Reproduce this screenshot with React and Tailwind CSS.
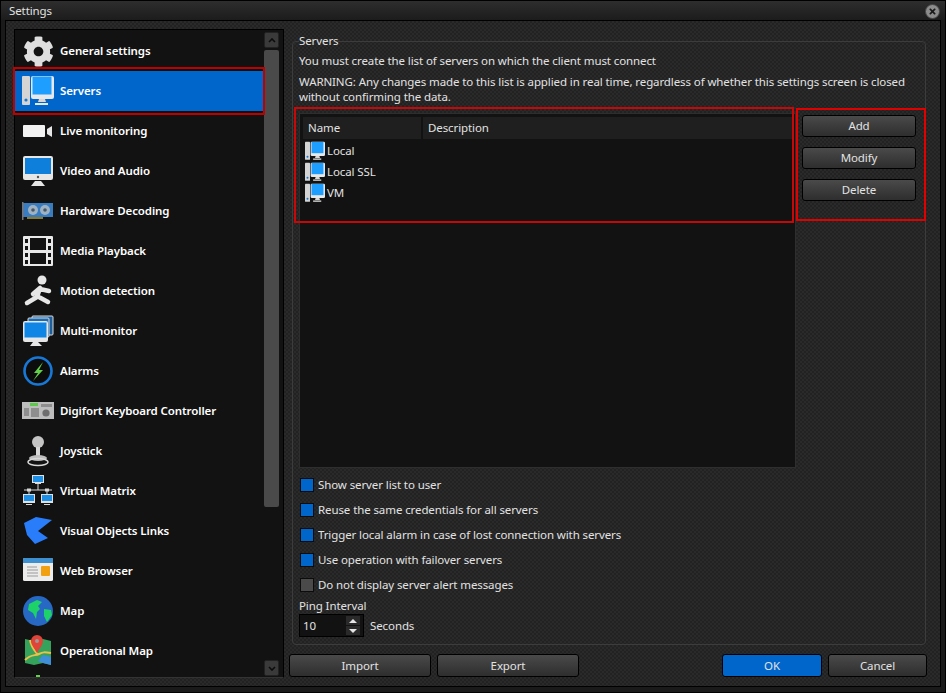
import { FaCog, FaTimes } from "react-icons/fa";

function ServerIcon({ className }) {
  return (
    <svg viewBox="0 0 32 32" className={className}>
      <rect x="0" y="1" width="8" height="29" rx="1" fill="#d4d4d4" />
      <circle cx="4" cy="25" r="1.6" fill="#1478d8" />
      <rect x="9" y="1" width="23" height="23" rx="2" fill="#e8e8e8" />
      <rect x="10.5" y="1.5" width="19" height="18" fill="#1e9fff" />
      <path d="M17 24h6l1 3h-8z" fill="#d8d8d8" />
      <rect x="13" y="28" width="13" height="2" fill="#e8e8e8" />
    </svg>
  );
}

function CameraIcon() {
  return (
    <svg viewBox="0 0 32 32" className="w-8 h-8">
      <rect x="1" y="10" width="22" height="12" rx="1" fill="#f2f2f2" />
      <path d="M25 14l5-3v11l-5-3z" fill="#e6e6e6" />
    </svg>
  );
}

function MonitorIcon() {
  return (
    <svg viewBox="0 0 32 32" className="w-8 h-8">
      <rect x="1" y="1" width="30" height="24" rx="2" fill="#e6e6e6" />
      <rect x="3" y="3" width="26" height="16" fill="#0f7fdc" />
      <circle cx="16" cy="22" r="1.2" fill="#555" />
      <path d="M13 26h6l4 5H9z" fill="#e6e6e6" />
    </svg>
  );
}

function GpuIcon() {
  return (
    <svg viewBox="0 0 32 32" className="w-8 h-8">
      <rect x="1" y="8" width="30" height="14" fill="#3a7cc0" />
      <rect x="0" y="7" width="1.5" height="18" fill="#777" />
      <circle cx="11" cy="15" r="5" fill="#9fb2c4" />
      <circle cx="23" cy="15" r="5" fill="#9fb2c4" />
      <circle cx="11" cy="15" r="1.8" fill="#4a5a6a" />
      <circle cx="23" cy="15" r="1.8" fill="#4a5a6a" />
      <rect x="5" y="22" width="16" height="2" fill="#8a7a30" />
    </svg>
  );
}

function FilmIcon() {
  return (
    <svg viewBox="0 0 32 32" className="w-8 h-8">
      <path
        fillRule="evenodd"
        fill="#e8e8e8"
        d="M1 2a1 1 0 011-1h28a1 1 0 011 1v28a1 1 0 01-1 1H2a1 1 0 01-1-1zM8 3v12h16V3zM8 18v11h16V18zM3 4v4h3V4zM3 11v4h3v-4zM3 18v4h3v-4zM3 25v4h3v-4zM26 4v4h3V4zM26 11v4h3v-4zM26 18v4h3v-4zM26 25v4h3v-4z"
      />
    </svg>
  );
}

function RunnerIcon() {
  return (
    <svg viewBox="0 0 32 32" className="w-8 h-8">
      <circle cx="20" cy="5" r="4.5" fill="#e6e6e6" />
      <path
        d="M18 13l-3 9-10 6M15 21l11 6M18 14l9 2M18 13l-7 6"
        fill="none"
        stroke="#e6e6e6"
        strokeWidth="4.5"
        strokeLinecap="round"
        strokeLinejoin="round"
      />
    </svg>
  );
}

function MultiMonitorIcon() {
  return (
    <svg viewBox="0 0 32 32" className="w-8 h-8">
      <rect x="10" y="1" width="21" height="19" rx="1" fill="#1c5f9c" stroke="#dcdcdc" />
      <rect x="6" y="3" width="21" height="19" rx="1" fill="#1c6cb4" stroke="#dcdcdc" />
      <rect x="1" y="6" width="25" height="21" rx="2" fill="#e6e6e6" />
      <rect x="2.5" y="7.5" width="22" height="15" fill="#0f86e6" />
      <path d="M11 27h5l4 4H8z" fill="#e6e6e6" />
    </svg>
  );
}

function AlarmIcon() {
  return (
    <svg viewBox="0 0 32 32" className="w-8 h-8">
      <circle cx="16" cy="16" r="13.5" fill="#0c0c0c" stroke="#1878d8" strokeWidth="2.6" />
      <path d="M21 7l-9 11h4l-5 8 10-11h-4z" fill="#62d24a" />
    </svg>
  );
}

function KeyboardIcon() {
  return (
    <svg viewBox="0 0 32 32" className="w-8 h-8">
      <rect x="0" y="7" width="32" height="17" fill="#bdbdbd" />
      <rect x="8" y="8" width="8" height="3" fill="#5cc94a" />
      <rect x="19" y="9" width="11" height="3" fill="#8e8e8e" />
      <rect x="2" y="13" width="5" height="8" fill="#8e8e8e" />
      <rect x="9" y="13" width="8" height="9" fill="#8e8e8e" />
      <circle cx="24" cy="18" r="3.6" fill="#6e6e6e" />
    </svg>
  );
}

function JoystickIcon() {
  return (
    <svg viewBox="0 0 32 32" className="w-8 h-8">
      <circle cx="16" cy="7" r="6" fill="#c4c4c4" />
      <rect x="14" y="12" width="4" height="10" fill="#d8d8d8" />
      <ellipse cx="16" cy="23" rx="9" ry="3" fill="#bdbdbd" />
      <ellipse cx="16" cy="27" rx="10" ry="3.5" fill="none" stroke="#d8d8d8" strokeWidth="1.4" />
    </svg>
  );
}

function MatrixIcon() {
  return (
    <svg viewBox="0 0 32 32" className="w-8 h-8">
      <path d="M16 9v6M2 15h28M7 15v5M25 15v5" stroke="#d8d8d8" strokeWidth="1" fill="none" />
      <rect x="5" y="13.5" width="4" height="3" fill="#d8d8d8" />
      <rect x="23" y="13.5" width="4" height="3" fill="#d8d8d8" />
      <rect x="10" y="0" width="12" height="8" fill="#e0e0e0" />
      <rect x="11" y="1" width="10" height="6" fill="#1e8fe6" />
      <rect x="1" y="19" width="12" height="9" fill="#e0e0e0" />
      <rect x="2" y="20" width="10" height="6" fill="#1e8fe6" />
      <rect x="19" y="19" width="12" height="9" fill="#e0e0e0" />
      <rect x="20" y="20" width="10" height="6" fill="#1e8fe6" />
      <rect x="4" y="29" width="6" height="1" fill="#d8d8d8" />
      <rect x="22" y="29" width="6" height="1" fill="#d8d8d8" />
      <rect x="13" y="8" width="6" height="1" fill="#d8d8d8" />
    </svg>
  );
}

function ObjectsIcon() {
  return (
    <svg viewBox="0 0 32 32" className="w-8 h-8">
      <polygon points="2,8 14,2 30,5 16,16 26,23 13,29 5,20" fill="#2a7dfa" />
    </svg>
  );
}

function BrowserIcon() {
  return (
    <svg viewBox="0 0 32 32" className="w-8 h-8">
      <rect x="1" y="3" width="30" height="23" rx="1.5" fill="#ececec" />
      <path d="M1 4.5A1.5 1.5 0 012.500 3h27A1.500 1.500 0 0131 4.500V8H1z" fill="#3d8fd0" />
      <rect x="19" y="11" width="9" height="10" rx="1" fill="#f0a010" />
      <path d="M5 12h10M5 15h11M5 18h11M5 21h11" stroke="#9a9a9a" strokeWidth="1" />
    </svg>
  );
}

function GlobeIcon() {
  return (
    <svg viewBox="0 0 32 32" className="w-8 h-8">
      <circle cx="16" cy="16" r="15" fill="#2668c4" />
      <path d="M7 9l8-4 5 2-4 4 2 3-3 3-1 7-3-6-5-3z" fill="#1ed26a" />
      <path d="M22 14l7 1 1 5-5 7-3-6z" fill="#1ed26a" />
    </svg>
  );
}

function OpMapIcon() {
  return (
    <svg viewBox="0 0 32 32" className="w-8 h-8">
      <path d="M3 4l9 2 9-2 8 2v24l-8-2-9 2-9-2z" fill="#36a35c" />
      <path d="M21 20l8 2v8l-8-2-5-2z" fill="#3f8fd8" />
      <path d="M3 25c6-6 10-4 14-6s5-2 12-1M8 5c1 7 5 11 8 15" stroke="#e8c24a" strokeWidth="2" fill="none" />
      <path d="M15 0a6 6 0 016 6c0 4-4 8-6 12-2-4-6-8-6-12a6 6 0 016-6z" fill="#e04338" />
      <circle cx="15" cy="6" r="2" fill="#9a9a9a" />
    </svg>
  );
}

function BoltIcon() {
  return (
    <svg viewBox="0 0 32 32" className="w-8 h-8">
      <rect x="14" y="0" width="4" height="2" fill="#62d24a" />
    </svg>
  );
}

const menu = [
  { label: "General settings", icon: <FaCog className="w-[31px] h-[31px] text-[#dedede]" /> },
  { label: "Servers", icon: <ServerIcon className="w-8 h-8" />, active: true },
  { label: "Live monitoring", icon: <CameraIcon /> },
  { label: "Video and Audio", icon: <MonitorIcon /> },
  { label: "Hardware Decoding", icon: <GpuIcon /> },
  { label: "Media Playback", icon: <FilmIcon /> },
  { label: "Motion detection", icon: <RunnerIcon /> },
  { label: "Multi-monitor", icon: <MultiMonitorIcon /> },
  { label: "Alarms", icon: <AlarmIcon /> },
  { label: "Digifort Keyboard Controller", icon: <KeyboardIcon /> },
  { label: "Joystick", icon: <JoystickIcon /> },
  { label: "Virtual Matrix", icon: <MatrixIcon /> },
  { label: "Visual Objects Links", icon: <ObjectsIcon /> },
  { label: "Web Browser", icon: <BrowserIcon /> },
  { label: "Map", icon: <GlobeIcon /> },
  { label: "Operational Map", icon: <OpMapIcon /> },
  { label: "", icon: <BoltIcon /> },
];

const servers = ["Local", "Local SSL", "VM"];

const options = [
  { label: "Show server list to user", checked: true },
  { label: "Reuse the same credentials for all servers", checked: true },
  { label: "Trigger local alarm in case of lost connection with servers", checked: true },
  { label: "Use operation with failover servers", checked: true },
  { label: "Do not display server alert messages", checked: false },
];

function Button({ children, className = "", primary = false }) {
  return (
    <button
      className={
        "h-[22px] border border-black rounded-[3px] text-[#e2e2e2] flex items-center justify-center " +
        (primary ? "bg-[#0066cc] " : "bg-gradient-to-b from-[#4a4a4a] to-[#2e2e2e] ") +
        className
      }
    >
      {children}
    </button>
  );
}

function ScrollButton({ up }) {
  return (
    <div className="w-[15px] h-[16px] shrink-0 rounded-[2px] bg-[#3a3a3a] border border-[#222] flex items-center justify-center">
      <svg viewBox="0 0 8 5" className="w-[8px] h-[5px]">
        <path
          d={up ? "M1 4l3-3 3 3" : "M1 1l3 3 3-3"}
          fill="none"
          stroke="#0c0c0c"
          strokeWidth="1.6"
        />
      </svg>
    </div>
  );
}

export default function App() {
  return (
    <div className="relative w-[946px] h-[693px] overflow-hidden flex flex-col bg-[#1a1a1a] border border-black font-['Noto_Sans',sans-serif] text-[11.5px] tracking-[-0.1px] text-[#e2e2e2]">
      <div className="h-[19px] shrink-0 flex items-center justify-between pl-[8px] pr-[5px] bg-gradient-to-b from-[#2e2e2e] to-[#1c1c1c]">
        <span>Settings</span>
        <div className="w-[15px] h-[15px] mt-[2px] rounded-full bg-[#8c8c8c] flex items-center justify-center border border-[#444]">
          <FaTimes className="w-[9px] h-[9px] text-[#1a1a1a]" />
        </div>
      </div>

      <div className="flex-1 mx-[4px] mb-[5px] flex border border-black bg-[repeating-conic-gradient(#2a2a2a_0_25%,#222222_0_50%)] bg-[length:4px_4px]">
        {/* left menu */}
        <div className="w-[270px] h-[649px] ml-[8px] mt-[8px] flex bg-[#121212] border border-black border-b-[#333] overflow-hidden shrink-0">
          <div className="w-[249px] h-[647px] pt-px overflow-hidden shrink-0">
            {menu.map((item, i) => (
              <div
                key={i}
                className={
                  "h-[40px] flex items-center gap-[6px] pl-[7px] font-semibold text-white " +
                  (item.active ? "bg-[#0066cc]" : "")
                }
              >
                <div className="w-8 h-8 shrink-0 flex items-center justify-center">{item.icon}</div>
                <span>{item.label}</span>
              </div>
            ))}
          </div>
          <div className="w-[16px] flex flex-col pt-[2px] pb-[1px]">
            <ScrollButton up />
            <div className="w-[15px] h-[457px] mt-[2px] rounded-[2px] bg-[#4a4a4a]" />
            <div className="flex-1" />
            <ScrollButton />
          </div>
        </div>

        {/* right side */}
        <div className="flex-1 ml-[8px] mr-[14px] mt-[12px] flex flex-col">
          <fieldset className="h-[612px] border border-[#3c3c3c] rounded-[4px] pl-[6px] pb-[8px]">
            <legend className="leading-[16px]">Servers</legend>
            <p className="mt-[4px] leading-[16px]">You must create the list of servers on which the client must connect</p>
            <p className="mt-[5px] leading-[15px] w-[610px]">
              WARNING: Any changes made to this list is applied in real time, regardless of whether this settings screen is closed without confirming the data.
            </p>
            <div className="mt-[9px] flex gap-[6px]">
              <div className="w-[497px] h-[355px] bg-[#121212] border border-[#2e2e2e] p-[3px] pb-0">
                <div className="h-[22px] flex gap-[2px]">
                  <div className="w-[118px] bg-[#1f1f1f] pl-[5px] flex items-center">Name</div>
                  <div className="flex-1 bg-[#1f1f1f] pl-[5px] flex items-center">Description</div>
                </div>
                <div className="mt-px">
                  {servers.map((name) => (
                    <div key={name} className="h-[21px] flex items-center gap-[2px] pl-[2px]">
                      <ServerIcon className="w-[20px] h-[20px]" />
                      <span>{name}</span>
                    </div>
                  ))}
                </div>
              </div>
              <div className="w-[114px] pt-[2px] flex flex-col gap-[10px]">
                <Button>Add</Button>
                <Button>Modify</Button>
                <Button>Delete</Button>
              </div>
            </div>
            <div className="mt-[4px]">
              {options.map((opt) => (
                <div key={opt.label} className="h-[25px] flex items-center gap-[4px] pl-px">
                  <div
                    className={
                      "w-[14px] h-[14px] border border-[#0c0c0c] " +
                      (opt.checked ? "bg-[#0066cc]" : "bg-[#4a4a4a]")
                    }
                  />
                  <span>{opt.label}</span>
                </div>
              ))}
            </div>
            <div className="mt-px leading-[16px]">Ping Interval</div>
            <div className="flex items-center gap-[6px]">
              <div className="w-[65px] h-[23px] bg-[#121212] border border-black flex items-center justify-between pl-[3px] pr-[3px]">
                <span>10</span>
                <div className="flex flex-col gap-px">
                  <div className="w-[14px] h-[9px] bg-[#2a2a2a] flex items-center justify-center">
                    <svg viewBox="0 0 8 4" className="w-[8px] h-[4px]"><path d="M0 4l4-4 4 4z" fill="#e6e6e6" /></svg>
                  </div>
                  <div className="w-[14px] h-[9px] bg-[#2a2a2a] flex items-center justify-center">
                    <svg viewBox="0 0 8 4" className="w-[8px] h-[4px]"><path d="M0 0l4 4 4-4z" fill="#e6e6e6" /></svg>
                  </div>
                </div>
              </div>
              <span>Seconds</span>
            </div>
          </fieldset>

          <div className="mt-[9px] -ml-[3px] flex">
            <Button className="w-[142px] h-[23px]">Import</Button>
            <Button className="w-[142px] h-[23px] ml-[6px]">Export</Button>
            <Button primary className="w-[100px] h-[23px] ml-auto">OK</Button>
            <Button className="w-[99px] h-[23px] ml-[6px] -mr-px">Cancel</Button>
          </div>
        </div>
      </div>

      {/* highlight boxes drawn over the screenshot */}
      <div className="absolute left-[12px] top-[66px] w-[252px] h-[48px] border-2 border-[#c00000]" />
      <div className="absolute left-[293px] top-[106px] w-[500px] h-[116px] border-2 border-[#c80808]" />
      <div className="absolute left-[795px] top-[107px] w-[130px] h-[113px] border-2 border-[#e00000]" />
    </div>
  );
}
